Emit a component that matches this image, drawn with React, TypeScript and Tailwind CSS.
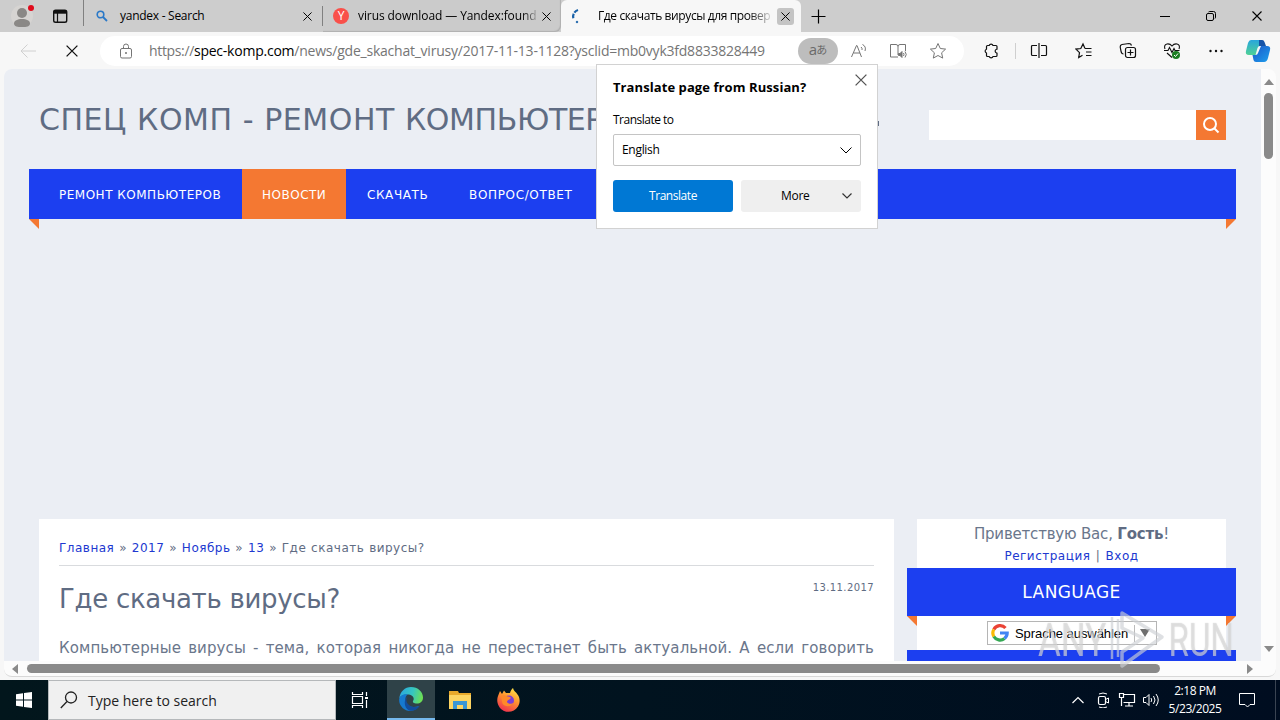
import type { ReactNode } from "react";

interface IconProps {
  size?: number;
  className?: string;
  children: ReactNode;
}

// Line icon on a grid that equals its pixel size.
function Icon({ size = 16, className = "", children }: IconProps) {
  return (
    <svg
      width={size}
      height={size}
      viewBox={`0 0 ${size} ${size}`}
      fill="none"
      stroke="currentColor"
      strokeWidth="1"
      className={`block shrink-0 ${className}`}
    >
      {children}
    </svg>
  );
}

function CloseIcon({ size = 10, className = "" }: { size?: number; className?: string }) {
  return (
    <svg width={size} height={size} viewBox="0 0 10 10" className={`block shrink-0 ${className}`}>
      <path d="M.5.5l9 9M9.5.5l-9 9" stroke="currentColor" strokeWidth="1.1" />
    </svg>
  );
}

function TabBar() {
  return (
    <div className="flex h-8 shrink-0 bg-[#cdcdcd] text-[12px] text-black">
      <div className="mb-1.5 flex w-[84px] shrink-0 border-r border-[#808080] pt-1">
        <svg width="83" height="28" viewBox="0 4 83 28" className="block">
          <circle cx="22" cy="16" r="11" fill="#d6d4d2" />
          <circle cx="22" cy="13" r="5" fill="#8a8886" />
          <path d="M14 23.5c0-3 3.5-4.500 8-4.500s8 1.500 8 4.500-3.500 3.500-8 3.500-8-.5-8-3.500z" fill="#8a8886" />
          <circle cx="31" cy="8" r="3" fill="#e00b1c" />
          <rect x="53.700" y="10.200" width="13" height="12" rx="1.800" fill="none" stroke="#111" strokeWidth="1.400" />
          <path d="M53.500 12.200h13.500" stroke="#111" strokeWidth="3" />
          <path d="M57.500 13v9.500" stroke="#111" strokeWidth="1.200" />
        </svg>
      </div>
      <div className="flex w-[239px] shrink-0 items-center pl-3">
        <Icon size={12} className="text-[#2b79c8]">
          <circle cx="4.500" cy="4.500" r="3.300" strokeWidth="1.600" />
          <path d="M7 7l4 4" strokeWidth="1.800" />
        </Icon>
        <span className="ml-3 w-[182px] tracking-[-.27px]">yandex - Search</span>
        <CloseIcon size={9} className="ml-[1px]" />
        <div className="ml-auto h-5 w-px bg-[#808080]" />
      </div>
      <div className="flex w-[238px] shrink-0 items-center rounded-br-md bg-[#cbcbcb] pl-[10px] shadow-[inset_-1px_-1px_1px_#b0b0b0]">
        <div className="flex size-4 items-center justify-center rounded-full bg-[#f9504a] text-[12px] leading-none text-white">Y</div>
        <div className="flex w-[193px] whitespace-nowrap pl-[9px]">
          <span className="bg-gradient-to-r from-black from-90% to-[#aaa] bg-clip-text tracking-[-.1px] text-transparent">
            virus download — Yandex:found
          </span>
        </div>
        <CloseIcon size={9} />
      </div>
      <div className="flex w-[240px] shrink-0 items-center rounded-t-md bg-[#f7f7f7] pl-[10px]">
        <Icon size={16} className="text-[#1861a8]">
          <path d="M7 2A7 7 0 0 0 2.500 11" strokeWidth="2.200" strokeDasharray="4.500 1.200" />
          <circle cx="6" cy="14" r=".8" fill="currentColor" />
        </Icon>
        <div className="ml-[11px] flex w-[173px] shrink-0 whitespace-nowrap">
          <span className="bg-gradient-to-r from-black from-85% to-[#ccc] bg-clip-text tracking-[-.4px] text-transparent">
            Где скачать вирусы для провер
          </span>
        </div>
        <div className="ml-[6px] flex size-[17px] items-center justify-center rounded-[3px] bg-[#c4c4c4]">
          <CloseIcon size={9} />
        </div>
      </div>
      <div className="flex flex-1 items-center pl-[10px]">
        <Icon size={15}>
          <path d="M7.500 .5v14M.5 7.500h14" strokeWidth="1.200" />
        </Icon>
        <div className="ml-auto flex items-center gap-[36px] pr-[18px]">
          <Icon size={10}>
            <path d="M0 5.500h10" />
          </Icon>
          <Icon size={10}>
            <rect x=".5" y="2.500" width="7" height="7" rx="1.500" />
            <path d="M2.500 1C3 .5 3.500.5 4 .5h3.500a2 2 0 0 1 2 2V6q0 1-.5 1.500" />
          </Icon>
          <CloseIcon size={10} />
        </div>
      </div>
    </div>
  );
}

function Toolbar() {
  return (
    <div className="flex h-[37px] shrink-0 items-center bg-[#f7f7f7] text-[#111]">
      <Icon size={16} className="ml-5 text-[#d0d0d0]">
        <path d="M16 8H1M7.500 1.500L1 8l6.500 6.500" />
      </Icon>
      <CloseIcon size={12} className="ml-[30px]" />
      <div className="ml-[22px] flex h-[30px] w-[864px] shrink-0 items-center rounded-full bg-white text-[#757575]">
        <Icon size={16} className="ml-[18px]">
          <rect x="2.500" y="5.500" width="11" height="9.500" rx="1.500" />
          <path d="M5.500 5.500V3.500a2.500 2.500 0 0 1 5 0v2" />
          <circle cx="8" cy="10" r=".6" fill="currentColor" />
        </Icon>
        <span className="ml-[15px] w-[649px] whitespace-nowrap text-[14px] tracking-[-.23px]">
          <span className="tracking-[-.35px]">https://</span>
          <span className="text-black">spec-komp.com</span>/news/gde_skachat_virusy/2017-11-13-1128?ysclid=mb0vyk3fd8833828449
        </span>
        <div className="flex h-[26px] w-10 shrink-0 items-center justify-center rounded-full bg-[#bdbdbd] pb-0.5 text-[15px] text-[#6a6a6a]">
          a<span className="-ml-px font-['Noto_Sans_CJK_JP',sans-serif] text-[11px]">あ</span>
        </div>
        <Icon size={18} className="ml-3">
          <path d="M1.500 15L6.500 3.500h.5L11.500 15M3.500 11h6.500" />
          <path d="M11 5q1.500 1 1 3M12.500 2.500q4 2 2.500 6.500" />
        </Icon>
        <Icon size={18} className="ml-[21px]">
          <path d="M9 15H1.500V2.500H7Q9 2.500 9 4.500V13M9 4.500q0-2 2-2h5.500V9" />
          <path d="M9.500 11.500h1.500l2-2v6l-2-2H9.500z" fill="currentColor" />
          <path d="M14.500 11q1 1.500 0 3M16 9.500q2.500 3 0 6" />
        </Icon>
        <Icon size={18} className="ml-[22px]">
          <path d="M9 1.500l2.300 5 5.300.6-4 3.700 1.100 5.300L9 13.500l-4.700 2.600 1.100-5.300-4-3.700 5.300-.6z" />
        </Icon>
      </div>
      <Icon size={18} className="ml-[18px]">
        <path
          d="M5.500 3.500h1.700a2 2 0 0 1 3.800 0h3q1 0 1 1v2.700h-.5a2 2 0 0 0 0 3.800h.5v2.500q0 1-1 1h-3a2 2 0 0 1-3.800 0H5.500q-1 0-1-1V11a2 2 0 0 1 0-3.800V4.500q0-1 1-1z"
          strokeWidth="1.200"
          strokeLinejoin="round"
        />
      </Icon>
      <div className="ml-[15px] h-4 w-px bg-[#cfcfcf]" />
      <Icon size={18} className="ml-[14px]">
        <path d="M7 3.500H2.500a1 1 0 0 0-1 1v8a1 1 0 0 0 1 1H7M11 3.500h4.500a1 1 0 0 1 1 1v8a1 1 0 0 1-1 1H11M9 1v15" strokeWidth="1.200" />
      </Icon>
      <Icon size={18} className="ml-[27px]">
        <path d="M10 6.500L8 2 5.800 6.500l-4.800.6 3.500 3.500-.8 4.900 3.800-2.200M10 6.500h6.500M11 10h5.500M11 13.500h5.500" strokeWidth="1.200" />
      </Icon>
      <Icon size={18} className="ml-[26px]">
        <rect x="6.500" y="5.500" width="10" height="10" rx="2" strokeWidth="1.200" />
        <path d="M11.500 7.500v6M8.500 10.500h6M12.500 3.500q-.5-2-2.500-2l-7 1Q1 3 1.200 5l1 5q.5 2 2.300 2" strokeWidth="1.200" />
      </Icon>
      <Icon size={18} className="ml-[26px]">
        <path d="M2 7Q.5 3 4 2q3-.5 5 2 2-2.500 5-2 3.500 1 2 5M1 8.500h4l1.500-3 2.500 5 2-4 1 2h4.500M4 11l5 4.500" strokeWidth="1.100" />
        <circle cx="13" cy="13" r="4" fill="#1b7e22" stroke="none" />
        <path d="M11 13l1.500 1.500 2.500-3" stroke="white" />
      </Icon>
      <Icon size={18} className="ml-[26px]">
        <g fill="currentColor" stroke="none">
          <circle cx="3.500" cy="9" r="1.200" />
          <circle cx="9" cy="9" r="1.200" />
          <circle cx="14.500" cy="9" r="1.200" />
        </g>
      </Icon>
      <svg width="26" height="24" viewBox="0 0 26 24" className="ml-5 block shrink-0">
        <defs>
          <linearGradient id="cpl" x1="0" y1="0" x2="0" y2="1">
            <stop offset="0" stopColor="#29a6dc" />
            <stop offset="1" stopColor="#4fd196" />
          </linearGradient>
          <linearGradient id="cpr" x1="0" y1="0" x2="1" y2="1">
            <stop offset="0" stopColor="#1a55c9" />
            <stop offset="1" stopColor="#1ea0ec" />
          </linearGradient>
        </defs>
        <path d="M6 1h10q2 0 2.500 2L20 7h-5q-2 0-2.500 2L10.500 16H4q-4 0-3-4L3 4q1-3 3-3z" fill="url(#cpl)" />
        <path d="M14 1h3q2 0 2.500 2L21 7h-7z" fill="#1553a8" />
        <path d="M16 7h6q4 0 3 4l-2 8q-1 4-4 4h-8q-2 0-2.500-2L7.500 16h3q2 0 2.500-2z" fill="url(#cpr)" />
      </svg>
    </div>
  );
}

const navItems = [
  { label: "РЕМОНТ КОМПЬЮТЕРОВ", className: "w-[202px] tracking-[.5px]" },
  { label: "НОВОСТИ", className: "w-[104px] bg-[#f47832] tracking-[.5px]" },
  { label: "СКАЧАТЬ", className: "w-[101px] tracking-[.6px]" },
  { label: "ВОПРОС/ОТВЕТ", className: "w-[144px] tracking-[.65px]" },
];

function Folds() {
  return (
    <div className="flex h-2.5 justify-between">
      <svg width="10" height="10" className="block">
        <path d="M0 0h10v10z" fill="#f47832" />
      </svg>
      <svg width="10" height="10" className="block">
        <path d="M0 0h10L0 10z" fill="#f47832" />
      </svg>
    </div>
  );
}

function SiteHeader() {
  return (
    <>
      <div className="flex h-[100px] px-[35px]">
        <h1 className="w-[838px] whitespace-nowrap pt-[33px] text-[30px] leading-[36px] tracking-[.55px] text-[#5f6c83]">
          СПЕЦ КОМП - РЕМОНТ <span className="tracking-[-.4px]">КОМПЬЮТЕРОВ</span>
        </h1>
        <div className="mt-[52px] h-[5px] w-0.5 bg-[#5f6c83]" />
        <div className="ml-auto mt-[41px] flex h-[30px] w-[297px]">
          <div className="flex-1 bg-white" />
          <div className="flex size-[30px] items-center justify-center bg-[#f47832] text-white">
            <Icon size={18}>
              <circle cx="8" cy="8" r="6" strokeWidth="2" />
              <path d="M12 12l4.500 4.500" strokeWidth="2" />
            </Icon>
          </div>
        </div>
      </div>
      <nav className="mx-[25px] flex h-[50px] gap-px bg-[#1c3ff0] pl-2.5 text-[12px] text-white">
        {navItems.map((item) => (
          <div key={item.label} className={`flex items-center whitespace-nowrap pl-5 pt-px ${item.className}`}>
            {item.label}
          </div>
        ))}
      </nav>
      <div className="mx-[25px]">
        <Folds />
      </div>
    </>
  );
}

const crumbs = ["Главная", "2017", "Ноябрь", "13"];

function Article() {
  return (
    <article className="h-full w-[855px] bg-white px-5 text-[#5f6c83]">
      <div className="flex h-[47px] items-center whitespace-pre border-b border-[#d9dbde] pt-[11px] text-[12px] tracking-[.5px] [word-spacing:.5px]">
        {crumbs.map((c) => (
          <span key={c}>
            <a className="text-[#2038d0]">{c}</a> »{" "}
          </span>
        ))}
        Где скачать вирусы?
      </div>
      <div className="flex justify-between">
        <h2 className="pt-[15px] text-[26px] leading-[36px] tracking-[-.3px]">Где скачать вирусы?</h2>
        <span className="pt-[14px] text-[10px] leading-[15px] tracking-[.4px]">13.11.2017</span>
      </div>
      <p className="mt-[19px] text-[15px] leading-[24px] tracking-[.1px] text-[#6a768b] [text-align-last:justify]">
        Компьютерные вирусы - тема, которая никогда не перестанет быть актуальной. А если говорить
      </p>
    </article>
  );
}

function GoogleLogo() {
  return (
    <svg width="18" height="18" viewBox="0 0 18 18" fill="none" strokeWidth="3.200" className="block">
      <path d="M14.500 4A7.200 7.200 0 0 0 2.800 5.500" stroke="#ea4335" />
      <path d="M2.800 5.500a7.200 7.200 0 0 0 0 7" stroke="#fbbc05" />
      <path d="M2.800 12.500A7.200 7.200 0 0 0 13.500 14.500" stroke="#34a853" />
      <path d="M13.500 14.500A7.200 7.200 0 0 0 16.200 9H9" stroke="#4285f4" />
    </svg>
  );
}

function Sidebar() {
  return (
    <aside className="w-[329px]">
      <div className="mx-2.5 h-[49px] bg-white pt-[4px] text-center text-[#5f6c83]">
        <div className="text-[15px] leading-[22px] tracking-[-.2px] text-[#6a768b]">
          Приветствую Вас, <b className="text-[#5f6c83]">Гость</b>!
        </div>
        <div className="text-[12px] leading-[22px] tracking-[.5px] text-[#2038d0] [word-spacing:1px]">
          Регистрация <span className="text-[#5f6c83]">|</span> Вход
        </div>
      </div>
      <div className="flex h-12 items-center justify-center bg-[#1c3ff0] pt-0.5 text-[17px] tracking-[.4px] text-white">LANGUAGE</div>
      <div className="flex h-[34px] justify-between">
        <svg width="10" height="10" className="block">
          <path d="M0 0h10v10z" fill="#f47832" />
        </svg>
        <div className="flex-1 bg-white pt-[5px]">
          <div className="ml-[70px] flex h-6 w-[170px] items-center border border-[#b5b5b5] pl-[3px] font-['Liberation_Sans',sans-serif] text-[13px] text-black">
            <GoogleLogo />
            <span className="ml-[6px] w-[120px] whitespace-nowrap border-r border-[#bbb] pt-px leading-4 tracking-[-.06px]">Sprache auswählen</span>
            <svg width="10" height="8" className="ml-[5px] block">
              <path d="M0 0h10L5 8z" fill="#6e6e6e" />
            </svg>
          </div>
        </div>
        <svg width="10" height="10" className="block">
          <path d="M0 0h10L0 10z" fill="#f47832" />
        </svg>
      </div>
      <div className="h-3 bg-[#1c3ff0]" />
    </aside>
  );
}

function TranslatePopup() {
  return (
    <div className="absolute left-[596px] top-[64px] h-[165px] w-[282px] border border-[#d2d2d2] bg-white px-4 text-[12px] text-black">
      <div className="flex justify-between">
        <div className="whitespace-nowrap pt-[13px] text-[13px] font-bold leading-[18px] tracking-[.08px]">Translate page from Russian?</div>
        <CloseIcon size={12} className="-mr-[6px] mt-[9px] text-[#555]" />
      </div>
      <div className="mt-[16px] text-[12px] leading-4 tracking-[-.5px]">Translate to</div>
      <div className="mt-[6px] flex h-8 items-center justify-between rounded-[2px] border border-[#c4c4c4] px-2 tracking-[-.3px]">
        English
        <Icon size={12}>
          <path d="M.5 3.500L6 9l5.500-5.500" />
        </Icon>
      </div>
      <div className="mt-[14px] flex gap-2">
        <div className="flex h-8 w-[120px] items-center justify-center rounded-[3px] bg-[#0078d4] tracking-[-.45px] text-white">Translate</div>
        <div className="flex h-8 w-[120px] items-center rounded-[3px] bg-[#efefef] pl-10 tracking-[-.3px]">
          More
          <Icon size={10} className="ml-auto mr-[9px] text-[#333]">
            <path d="M.5 2.500L5 7l4.500-4.500" strokeWidth="1.200" />
          </Icon>
        </div>
      </div>
    </div>
  );
}

function Watermark() {
  return (
    <div className="absolute left-[1038px] top-[608px] flex h-[64px] w-[196px] items-center justify-between font-[Roboto,sans-serif] text-[46px] leading-none text-white/45 [text-shadow:0_0_1px_rgba(130,130,130,.5)]">
      <span className="origin-left scale-x-[.76]">ANY</span>
      <svg width="60" height="62" viewBox="0 0 60 62" fill="none" stroke="#cdcfd4" strokeOpacity=".65" strokeWidth="3.500" strokeLinejoin="round" className="absolute left-[70px] block">
        <path d="M14 4l40 24-40 29V43l21-14-21-10z" />
        <path d="M4 8v42M10 10v38" strokeWidth="2.500" />
      </svg>
      <span className="origin-right scale-x-[.72]">RUN</span>
    </div>
  );
}

function EdgeLogo() {
  return (
    <svg width="24" height="24" viewBox="0 0 24 24" className="block">
      <defs>
        <linearGradient id="edgeTop" x1="0" y1=".3" x2="1" y2=".5">
          <stop offset="0" stopColor="#2aa7e0" />
          <stop offset=".55" stopColor="#36c6c0" />
          <stop offset="1" stopColor="#6ee052" />
        </linearGradient>
      </defs>
      <path d="M.3 11.500C1 4.500 6 0 12 0c7 0 12 5 12 10.500 0 4-3 6-6 6-3.500 0-4.500-1.500-4-2.500 1.500-1.500 1-5.500-4-6.500C5.500 7 1.500 8.500.3 11.500z" fill="url(#edgeTop)" />
      <path d="M.2 12C1 8.500 5 6.500 9 7.500c-3 1.500-3 5-2 7.500 1.500 4 6 6.500 13 4-3 4-7 5.500-11 4.700C3.500 22.500-.3 17.500.2 12z" fill="#1679cf" />
      <path d="M9 9.500c-3.500 3-1 9 4.500 10.300 3 .6 5.500 0 7.500-1.300-2.500 4.500-7 6-11 5C4.500 21 4.500 11.500 9 9.500z" fill="#124c9c" />
    </svg>
  );
}

function FirefoxLogo() {
  return (
    <svg width="24" height="24" viewBox="0 0 24 24" className="block">
      <defs>
        <linearGradient id="fox" x1=".8" y1="0" x2=".3" y2="1">
          <stop offset="0" stopColor="#ffe84a" />
          <stop offset=".45" stopColor="#ff9430" />
          <stop offset="1" stopColor="#f0304f" />
        </linearGradient>
      </defs>
      <path d="M3 3l2 3 2-3.500L9 5l4 0c.5-2 1.500-4 3-5 .5 3 3 4 4.500 6.500 2.500 3 3 8 .5 12-3 5-9 6.500-14 4.500C1 20.500-1 13 1 8z" fill="url(#fox)" />
      <circle cx="12" cy="12.500" r="5" fill="#7b3fd6" />
      <path d="M4 8c3-2 5 0 7 .5 2 .5 3 .5 2.500 2-1 1.500-3 1.500-3.500 3 0 2.500 4.500 3 6.500 1-2 5-9 4.500-11 1z" fill="#ff8a2a" />
    </svg>
  );
}

function Taskbar() {
  return (
    <div className="flex h-10 shrink-0 items-center bg-gradient-to-r from-[#02161c] via-[#01131f] to-[#000d20] text-white">
      <div className="flex w-12 justify-center">
        <svg width="16" height="16" viewBox="0 0 16 16" fill="white" className="block">
          <path d="M0 2.200l7-1v6.300H0zM8 1l8-1v7.500H8zM0 8.500h7v6.300l-7-1zM8 8.500h8V16l-8-1z" />
        </svg>
      </div>
      <div className="flex h-10 w-72 items-center border border-[#b5b8ba] bg-[#f0f0f0] pl-[11px] text-[#222]">
        <Icon size={18}>
          <circle cx="11" cy="6.500" r="5.500" strokeWidth="1.300" />
          <path d="M7 10.500L.8 17" strokeWidth="1.300" />
        </Icon>
        <span className="ml-[10px] text-[14px]">Type here to search</span>
      </div>
      <div className="flex w-[51px] justify-center pr-[3px]">
        <Icon size={18}>
          <path d="M1.500 1v2.500h10V1M1.500 17v-2.500h10V17M15.500 1v4M15.500 9v8M1.500 5.500h10v7h-10z" strokeWidth="1.200" />
          <path d="M14 7h3" strokeWidth="2" />
        </Icon>
      </div>
      <div className="flex h-10 w-12 items-center justify-center border-b-2 border-[#76b9ed] bg-[#2f4248]">
        <EdgeLogo />
      </div>
      <div className="flex w-[49px] justify-center">
        <svg width="22" height="20" viewBox="0 0 22 20" className="block">
          <path d="M0 1h9l1 2h12v16H0z" fill="#e8a92b" />
          <path d="M0 5h22v14H0z" fill="#fcd462" />
          <path d="M4 11h14v8h-4v-4H8v4H4z" fill="#3a96d4" />
        </svg>
      </div>
      <div className="flex w-[49px] justify-center">
        <FirefoxLogo />
      </div>
      <div className="ml-auto flex items-center">
        <Icon size={12}>
          <path d="M.5 9L6 3.500 11.500 9" strokeWidth="1.200" />
        </Icon>
        <Icon size={16} className="ml-[11px]">
          <rect x="3.500" y="4.500" width="7" height="8" rx="1.500" strokeWidth="1.200" />
          <path d="M10.500 7.500l3-1.500v5l-3-1.500M4 2q4-2 8 0M4 15q4 2 8 0" />
        </Icon>
        <Icon size={18} className="ml-[7px]">
          <path d="M5.500 3.500h11v8h-11M11 11.500v3M7 15h8M3.500 7v8M1.500 2.500h4v4h-4z" strokeWidth="1.200" />
        </Icon>
        <Icon size={18} className="ml-[6px]">
          <path d="M1.500 6.500H4l3-3v11l-3-3H1.500z" />
          <path d="M9 7q1.500 2 0 4M11.500 5q3 4 0 8M14 3q4.500 6 0 12" />
        </Icon>
        <div className="ml-[6px] w-[58px] text-center text-[12px] leading-[18px] tracking-[-.45px]">
          <div>2:18 PM</div>
          <div>5/23/2025</div>
        </div>
        <Icon size={18} className="ml-[14px]">
          <path d="M1.500 2.500h15v11H12l-2.500 2.500L7 13.500H1.500z" />
        </Icon>
        <div className="ml-[19px] h-10 w-px bg-[#3a4452]" />
        <div className="w-1" />
      </div>
    </div>
  );
}

export default function App() {
  return (
    <div className="relative flex h-[720px] w-[1280px] flex-col overflow-hidden bg-[#f7f7f7] font-['Open_Sans','Noto_Sans',sans-serif]">
      <TabBar />
      <Toolbar />
      <div className="ml-1 flex h-[608px] w-[1272px] shrink-0 flex-col overflow-hidden rounded-lg border-b border-[#d8d8d8] bg-[#fcfcfc]">
        <div className="flex h-[592px] shrink-0">
          <main className="w-[1257px] shrink-0 overflow-hidden bg-[#ebeef4] font-['DejaVu_Sans',sans-serif]">
            <SiteHeader />
            <div className="mt-[290px] flex h-[142px] gap-[13px] pl-[35px]">
              <Article />
              <Sidebar />
            </div>
          </main>
          <div className="flex w-[15px] flex-col items-center pt-[10px]">
            <svg width="10" height="6" className="block">
              <path d="M0 6L5 0l5 6z" fill="#8a8a8a" />
            </svg>
            <div className="mt-[8px] h-[66px] w-[9px] rounded-full bg-[#8a8a8a]" />
            <svg width="10" height="6" className="mb-[9px] mt-auto block">
              <path d="M0 0h10L5 6z" fill="#8a8a8a" />
            </svg>
          </div>
        </div>
        <div className="flex h-[15px] items-center pl-[8px]">
          <svg width="6" height="10" className="block">
            <path d="M6 0v10L0 5z" fill="#8a8a8a" />
          </svg>
          <div className="ml-[9px] h-[9px] w-[1133px] rounded-full bg-[#8a8a8a]" />
          <svg width="6" height="10" className="ml-[87px] block">
            <path d="M0 0v10l6-5z" fill="#8a8a8a" />
          </svg>
        </div>
      </div>
      <div className="h-[3px] shrink-0" />
      <Taskbar />
      <TranslatePopup />
      <Watermark />
    </div>
  );
}
